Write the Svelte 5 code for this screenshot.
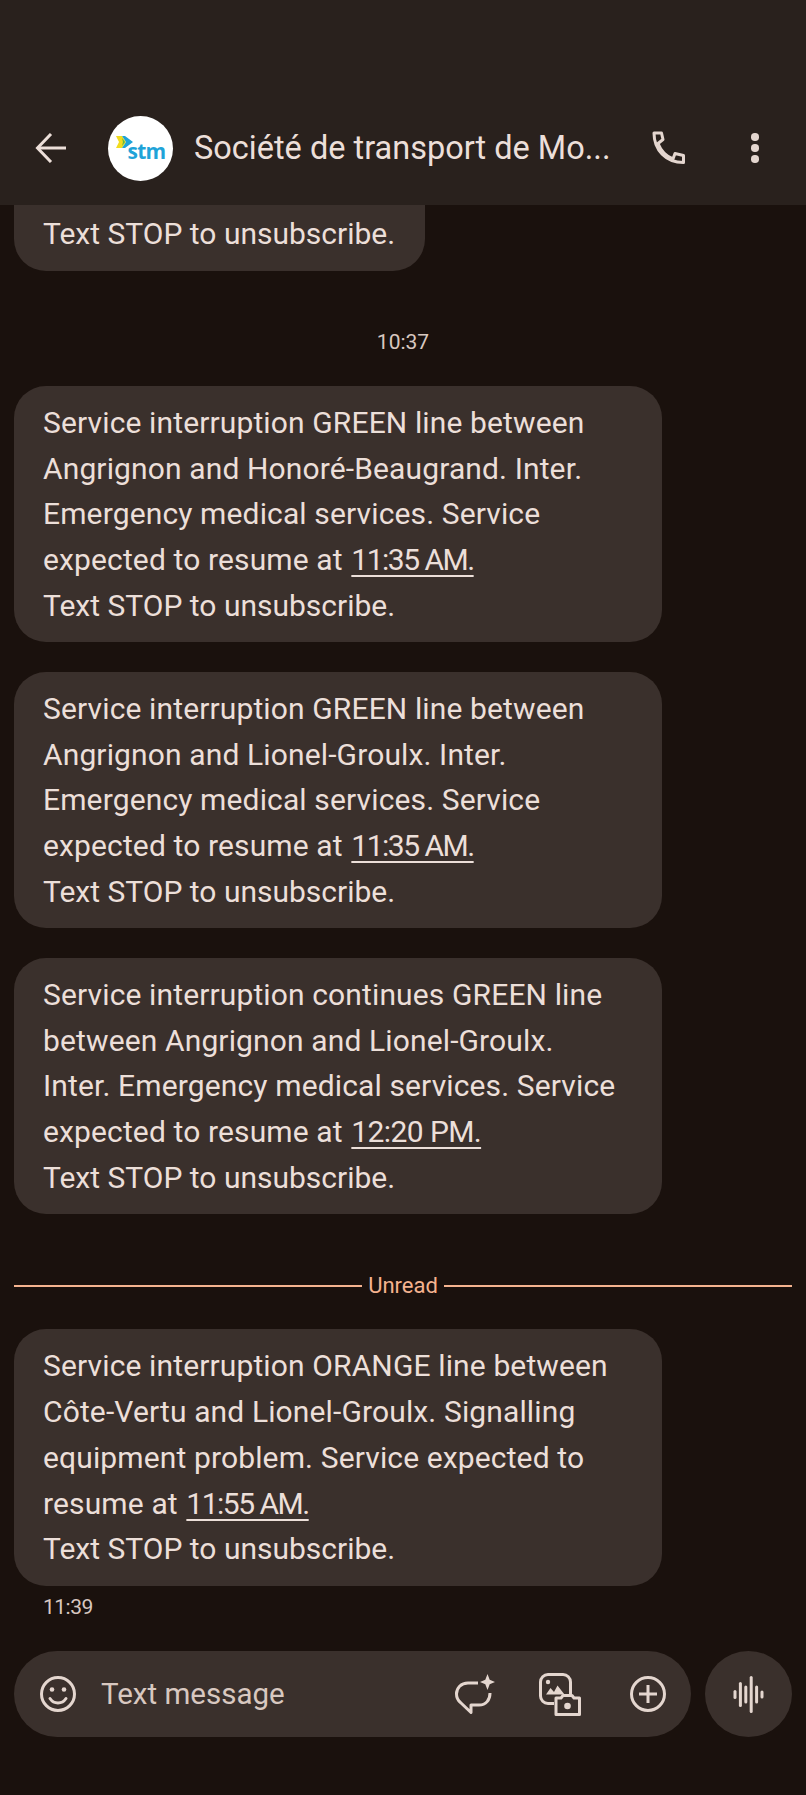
<script>
	const messages = [
		{
			id: 1,
			lines: [['Service interruption GREEN line between'], ['Angrignon and Honoré-Beaugrand. Inter.'], ['Emergency medical services. Service'], ['expected to resume at ', '11:35 AM.'], ['Text STOP to unsubscribe.']]
		},
		{
			id: 2,
			lines: [['Service interruption GREEN line between'], ['Angrignon and Lionel-Groulx. Inter.'], ['Emergency medical services. Service'], ['expected to resume at ', '11:35 AM.'], ['Text STOP to unsubscribe.']]
		},
		{
			id: 3,
			lines: [['Service interruption continues GREEN line'], ['between Angrignon and Lionel-Groulx.'], ['Inter. Emergency medical services. Service'], ['expected to resume at ', '12:20 PM.'], ['Text STOP to unsubscribe.']]
		}
	];

	const unread = [['Service interruption ORANGE line between'], ['Côte-Vertu and Lionel-Groulx. Signalling'], ['equipment problem. Service expected to'], ['resume at ', '11:55 AM.'], ['Text STOP to unsubscribe.']];

	const bars = [
		{ x: 2, h: 9 },
		{ x: 7.4, h: 25 },
		{ x: 12.8, h: 18 },
		{ x: 18.2, h: 37 },
		{ x: 23.6, h: 18 },
		{ x: 29, h: 8 }
	];
</script>

{#snippet bubble(lines)}
	<div class="bubble">
		{#each lines as [text, time]}
			<div class="line">{text}{#if time}<span class="time-link" class:narrow={time.startsWith('11')}>{time}</span>{/if}</div>
		{/each}
	</div>
{/snippet}

<div class="screen">
	<header class="topbar">
		<button class="icon-btn back" aria-label="Back">
			<svg width="32" height="30" viewBox="0 0 32 30" fill="none" stroke="#ecdfd9" stroke-width="3"><path d="M31 15H4"/><path d="M16 1 2.500 15 16 29"/></svg>
		</button>
		<div class="avatar">
			<svg class="chevrons" width="17" height="12" viewBox="0 0 17 12"><path d="M0 0h6l4 6-4 6H0l3-6z" fill="#f2dc1e"/><path d="M6 0h3l8 6-8 6H6l4-6z" fill="#1fa3d8"/><path d="M6 2l3 4-3 4 1-4z" fill="#5fb848"/></svg>
			<span class="stm">stm</span>
		</div>
		<div class="title">Société de transport de Mo...</div>
		<button class="icon-btn phone" aria-label="Call">
			<svg width="33" height="33" viewBox="0 0 33 33" fill="none" stroke="#e4d6cf" stroke-width="3" stroke-linejoin="round"><path d="M2 2h7.500L11 8.500 6 12.500C9 20 13.500 25 21 28l2-5.500 8.500 2V31.500C14 31.500 2 19 2 2z"/></svg>
		</button>
		<button class="icon-btn dots" aria-label="More">
			<span></span><span></span><span></span>
		</button>
	</header>

	<main class="thread">
		<div class="bubble first"><div class="line">Text STOP to unsubscribe.</div></div>
		<div class="stamp center">10:37</div>
		<div class="group">
			{#each messages as m (m.id)}
				{@render bubble(m.lines)}
			{/each}
		</div>
		<div class="unread"><span>Unread</span></div>
		{@render bubble(unread)}
		<div class="stamp left">11:39</div>
	</main>

	<footer class="composer">
		<div class="field">
			<svg class="emoji" width="36" height="36" viewBox="0 0 36 36" fill="none" stroke="#e4d6cf" stroke-width="3"><circle cx="18" cy="18" r="16.500"/><path d="M10 22.500c2 3 4.800 4.500 8 4.500s6-1.500 8-4.500" stroke-linecap="round"/><circle cx="12" cy="13.500" r="2.300" fill="#e4d6cf" stroke="none"/><circle cx="24" cy="13.500" r="2.300" fill="#e4d6cf" stroke="none"/></svg>
			<span class="placeholder">Text message</span>
			<svg class="spark" width="40" height="41" viewBox="0 0 40 41" fill="none"><path d="M23 9H13C6 9 1.500 14 1.500 20c0 3.500 1.500 6.500 4 8.500L16 38.500V31h8c7 0 11-5 11-12" stroke="#e4d6cf" stroke-width="3" stroke-linejoin="round"/><path d="M32.500 0l2.200 5.800L40 8l-5.300 2.200L32.500 16l-2.200-5.800L25 8l5.300-2.200z" fill="#e4d6cf"/></svg>
			<svg class="media" width="43" height="43" viewBox="0 0 43 43" fill="none"><path d="M15 30.500H9a7.500 7.500 0 0 1-7.500-7.500V9A7.500 7.500 0 0 1 9 1.500h15A7.500 7.500 0 0 1 31.500 9v12" stroke="#e4d6cf" stroke-width="3"/><circle cx="9" cy="9" r="2.200" fill="#e4d6cf"/><path d="M7 21.500l4.500-6.500 3.500 4 3.500-6.500 7 9z" fill="#e4d6cf"/><path d="M17 25h5l2-2.500h9l2 2.500h5.500v16.500H17z" stroke="#e4d6cf" stroke-width="3" stroke-linejoin="round"/><circle cx="28.500" cy="33" r="3.300" fill="#e4d6cf"/></svg>
			<svg class="plus" width="36" height="36" viewBox="0 0 36 36" fill="none" stroke="#e4d6cf" stroke-width="3"><circle cx="18" cy="18" r="16.500"/><path d="M18 9v18M9 18h18"/></svg>
		</div>
		<button class="voice" aria-label="Voice message">
			<svg width="31" height="39" viewBox="0 0 31 39" fill="none" stroke="#e4d6cf" stroke-width="3" stroke-linecap="round">
				{#each bars as b}
					<path d="M{b.x} {19.500 - b.h / 2 + 1.500}V{19.500 + b.h / 2 - 1.500}"/>
				{/each}
			</svg>
		</button>
	</footer>
</div>

<style>
	:global(body) {
		background: #1a110d;
	}

	.screen {
		height: 1795px;
		display: flex;
		flex-direction: column;
		overflow: hidden;
		background: #1a110d;
		color: #ecdfd9;
		font-family: Roboto, "Noto Sans", sans-serif;
	}

	.topbar {
		flex: none;
		height: 205px;
		box-sizing: border-box;
		padding-top: 116px;
		display: flex;
		align-items: flex-start;
		background: #29211d;
		position: relative;
		z-index: 1;
	}
	.icon-btn {
		background: none;
		border: 0;
		padding: 0;
		display: flex;
	}
	.back {
		margin: 17px 0 0 35px;
	}
	.avatar {
		width: 65px;
		height: 65px;
		margin-left: 41px;
		border-radius: 50%;
		background: #fff;
		display: flex;
		align-items: center;
		justify-content: center;
		position: relative;
	}
	.chevrons {
		position: absolute;
		left: 8px;
		top: 20px;
	}
	.stm {
		color: #1fa3d8;
		font: 700 21px/1 "Open Sans", sans-serif;
		letter-spacing: -0.700px;
		margin: 5px 0 0 12px;
	}
	.title {
		margin-left: 21px;
		font-size: 32.500px;
		line-height: 64px;
		white-space: nowrap;
		width: 420px;
	}
	.phone {
		margin: 15px 0 0 38px;
	}
	.dots {
		margin: 17px 0 0 66px;
		flex-direction: column;
		gap: 3.500px;
	}
	.dots span {
		width: 7.500px;
		height: 7.500px;
		border-radius: 50%;
		background: #e4d6cf;
	}

	.thread {
		flex: 1;
		min-height: 0;
		display: flex;
		flex-direction: column;
		justify-content: flex-end;
		padding: 0 14px;
	}
	.bubble {
		flex: none;
		width: 648px;
		box-sizing: border-box;
		padding: 14px 29px;
		background: #3a302c;
		border-radius: 32px;
		font-size: 30px;
		line-height: 45.700px;
		letter-spacing: 0.13px;
		white-space: nowrap;
	}
	.bubble.first {
		width: 411px;
		border-radius: 0 0 32px 32px;
	}
	.line:last-child {
		letter-spacing: 0;
	}
	.time-link {
		margin-left: 1px;
		letter-spacing: -0.600px;
		text-decoration: underline;
		text-decoration-thickness: 2px;
		text-underline-offset: 5px;
	}
	.time-link.narrow {
		letter-spacing: -1.500px;
	}
	.group {
		display: flex;
		flex-direction: column;
		gap: 29.500px;
	}
	.stamp {
		font-size: 21px;
		line-height: 28px;
		color: #d8c8c0;
	}
	.stamp.center {
		text-align: center;
		margin: 57px 0 30px;
	}
	.stamp.left {
		margin: 7px 0 0 29px;
		letter-spacing: -0.500px;
	}
	.unread {
		display: flex;
		align-items: center;
		gap: 6px;
		margin: 58px 0 29px;
		width: 778px;
		color: #f5b38f;
		font-size: 22px;
		line-height: 28px;
	}
	.unread::before,
	.unread::after {
		content: "";
		flex: 1;
		height: 2px;
		background: #f5b38f;
	}

	.composer {
		flex: none;
		height: 174px;
		box-sizing: border-box;
		padding: 30px 14px 0;
		display: flex;
		gap: 14px;
		align-items: flex-start;
	}
	.field {
		flex: 1;
		height: 86px;
		border-radius: 43px;
		background: #3a302c;
		display: flex;
		align-items: center;
		padding: 0 25px 0 26px;
	}
	.emoji,
	.spark,
	.media,
	.plus {
		flex: none;
	}
	.placeholder {
		margin-left: 25px;
		font-size: 29.500px;
		color: #d8c8c0;
		flex: 1;
	}
	.media {
		margin-left: 44px;
	}
	.plus {
		margin-left: 48px;
	}
	.voice {
		width: 87px;
		height: 86px;
		border: 0;
		padding: 0;
		border-radius: 50%;
		background: #3a302c;
		display: flex;
		align-items: center;
		justify-content: center;
	}
</style>
